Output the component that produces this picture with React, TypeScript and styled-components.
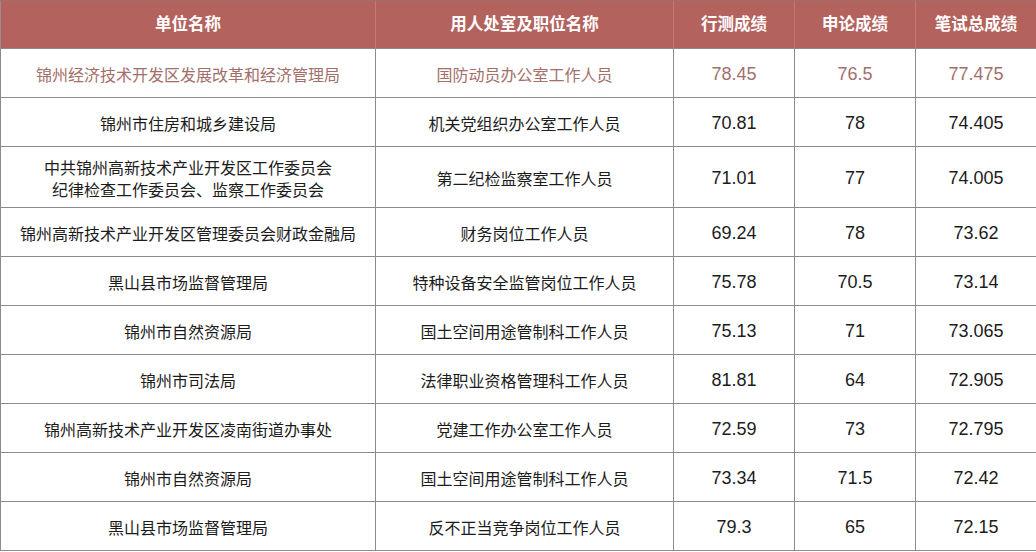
import React from 'react';
import styled, { createGlobalStyle } from 'styled-components';

const GlobalStyle = createGlobalStyle`
  html, body {
    margin: 0;
    padding: 0;
    background: #ffffff;
  }
  body {
    font-family: "Noto Sans CJK SC", "Liberation Sans", sans-serif;
  }
`;

const Table = styled.table`
  width: 1036px;
  border-collapse: collapse;
  table-layout: fixed;
  background: #ffffff;
`;

const HeadRow = styled.tr`
  height: 48px;
`;

const HeadCell = styled.th`
  padding: 0 0 3px;
  background: #b4625e;
  color: #ffffff;
  font-family: "Noto Sans CJK SC", sans-serif;
  font-size: 16.5px;
  line-height: 20px;
  font-weight: 700;
  text-align: center;
  border-left: 1px solid #c07a76;
  border-top: 1px solid #9a706e;
  &:first-child {
    border-left: 1px solid #9a8a89;
  }
  &:last-child {
    border-right: 1px solid #9a8a89;
  }
`;

const Row = styled.tr<{ $tall?: boolean }>`
  height: ${(p) => (p.$tall ? '61px' : '49px')};
`;

const Cell = styled.td<{ $highlight?: boolean; $num?: boolean }>`
  padding: 2px 4px 0;
  border: 1px solid #8c8c8c;
  text-align: center;
  vertical-align: middle;
  color: ${(p) => (p.$highlight ? '#a36f6b' : '#1c1c1c')};
  font-family: ${(p) =>
    p.$num ? '"Liberation Sans", Arial, sans-serif' : '"Noto Sans CJK SC", sans-serif'};
  font-size: ${(p) => (p.$num ? '18px' : '16px')};
  line-height: 22px;
  white-space: nowrap;
`;

interface Score {
  unit: string[];
  post: string;
  xc: string;
  sl: string;
  total: string;
}

const rows: Score[] = [
  { unit: ['锦州经济技术开发区发展改革和经济管理局'], post: '国防动员办公室工作人员', xc: '78.45', sl: '76.5', total: '77.475' },
  { unit: ['锦州市住房和城乡建设局'], post: '机关党组织办公室工作人员', xc: '70.81', sl: '78', total: '74.405' },
  { unit: ['中共锦州高新技术产业开发区工作委员会', '纪律检查工作委员会、监察工作委员会'], post: '第二纪检监察室工作人员', xc: '71.01', sl: '77', total: '74.005' },
  { unit: ['锦州高新技术产业开发区管理委员会财政金融局'], post: '财务岗位工作人员', xc: '69.24', sl: '78', total: '73.62' },
  { unit: ['黑山县市场监督管理局'], post: '特种设备安全监管岗位工作人员', xc: '75.78', sl: '70.5', total: '73.14' },
  { unit: ['锦州市自然资源局'], post: '国土空间用途管制科工作人员', xc: '75.13', sl: '71', total: '73.065' },
  { unit: ['锦州市司法局'], post: '法律职业资格管理科工作人员', xc: '81.81', sl: '64', total: '72.905' },
  { unit: ['锦州高新技术产业开发区凌南街道办事处'], post: '党建工作办公室工作人员', xc: '72.59', sl: '73', total: '72.795' },
  { unit: ['锦州市自然资源局'], post: '国土空间用途管制科工作人员', xc: '73.34', sl: '71.5', total: '72.42' },
  { unit: ['黑山县市场监督管理局'], post: '反不正当竞争岗位工作人员', xc: '79.3', sl: '65', total: '72.15' },
];

const App: React.FC = () => {
  return (
    <>
      <GlobalStyle />
      <Table>
        <colgroup>
          <col style={{ width: 375 }} />
          <col style={{ width: 298 }} />
          <col style={{ width: 121 }} />
          <col style={{ width: 121 }} />
          <col style={{ width: 121 }} />
        </colgroup>
        <thead>
          <HeadRow>
            <HeadCell>单位名称</HeadCell>
            <HeadCell>用人处室及职位名称</HeadCell>
            <HeadCell>行测成绩</HeadCell>
            <HeadCell>申论成绩</HeadCell>
            <HeadCell>笔试总成绩</HeadCell>
          </HeadRow>
        </thead>
        <tbody>
          {rows.map((r, i) => {
            const hl = i === 0;
            return (
              <Row key={i} $tall={r.unit.length > 1}>
                <Cell $highlight={hl}>
                  {r.unit.map((line, j) => (
                    <div key={j}>{line}</div>
                  ))}
                </Cell>
                <Cell $highlight={hl}>{r.post}</Cell>
                <Cell $highlight={hl} $num>{r.xc}</Cell>
                <Cell $highlight={hl} $num>{r.sl}</Cell>
                <Cell $highlight={hl} $num>{r.total}</Cell>
              </Row>
            );
          })}
        </tbody>
      </Table>
    </>
  );
};

export default App;
